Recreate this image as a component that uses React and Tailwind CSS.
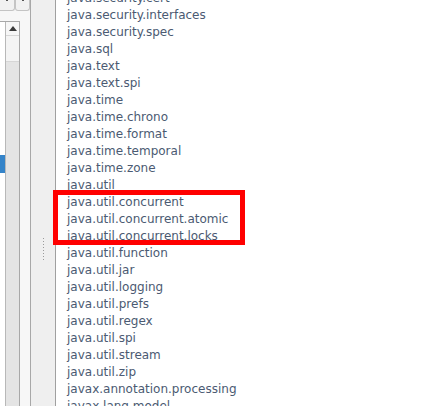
import React from "react";

const packages = [
  "java.security.cert",
  "java.security.interfaces",
  "java.security.spec",
  "java.sql",
  "java.text",
  "java.text.spi",
  "java.time",
  "java.time.chrono",
  "java.time.format",
  "java.time.temporal",
  "java.time.zone",
  "java.util",
  "java.util.concurrent",
  "java.util.concurrent.atomic",
  "java.util.concurrent.locks",
  "java.util.function",
  "java.util.jar",
  "java.util.logging",
  "java.util.prefs",
  "java.util.regex",
  "java.util.spi",
  "java.util.stream",
  "java.util.zip",
  "javax.annotation.processing",
  "javax.lang.model",
];

const App = () => {
  return (
    <div className="relative flex h-[406px] w-[441px] overflow-hidden bg-white font-['DejaVu_Sans',sans-serif]">
      {/* LEFT PANE */}
      <div className="flex w-[31px] shrink-0 flex-col border-r border-[#a8a8a8] bg-[#f7f7f7]">
        <div className="flex h-[11px]">
          <div className="flex w-[15px] justify-center rounded-br-[3px] border-r border-b border-[#c4c4c4] bg-[#f1f1f1]">
            <div className="h-[1px] w-[2px] bg-[#555]" />
          </div>
          <div className="flex w-[15px] justify-center rounded-b-[3px] border-r border-b border-l border-[#c4c4c4] bg-[#f1f1f1]">
            <div className="h-[1px] w-[2px] bg-[#555]" />
          </div>
        </div>
        <div className="h-[10px]" />
        <div className="flex w-[20px] flex-1 border-t border-r border-[#a8a8a8]">
          <div className="flex w-[5px] flex-col bg-white">
            <div className="h-[133px]" />
            <div className="h-[18px] bg-[#3584c9]" />
          </div>
          <div className="flex w-[14px] flex-col border-l border-[#b8b8b8] bg-[#e4e4e4]">
            <div className="flex h-[13px] items-center justify-center bg-[#f6f6f6]">
              <svg width="8" height="5" viewBox="0 0 8 5">
                <path d="M0 5 L4 0 L8 5 Z" fill="#3a3a3a" />
              </svg>
            </div>
            <div className="h-[27px] border-t border-b border-[#d6d6d6] bg-[#f4f4f4]" />
          </div>
        </div>
      </div>

      {/* SPLITTER */}
      <div className="flex w-[25px] shrink-0 flex-col items-center border-r border-[#a0a0a0] bg-[#efefef]">
        <div className="h-[238px]" />
        <div className="flex flex-col gap-[2px]">
          {Array.from({ length: 8 }).map((_, i) => (
            <div key={i} className="h-[1px] w-[1px] bg-[#9a9a9a]" />
          ))}
        </div>
      </div>

      {/* PACKAGE LIST */}
      <div className="flex-1 pl-[11px]">
        <ul className="-mt-[10px]">
          {packages.map((p) => (
            <li
              key={p}
              className="h-[17px] whitespace-nowrap text-[12px] leading-[17px] text-[#4b5a72]"
            >
              {p}
            </li>
          ))}
        </ul>
      </div>

      {/* HIGHLIGHT */}
      <div className="absolute left-[53px] top-[190px] h-[55px] w-[192px] border-[5px] border-[#ff0000]" />
    </div>
  );
};

export default App;
